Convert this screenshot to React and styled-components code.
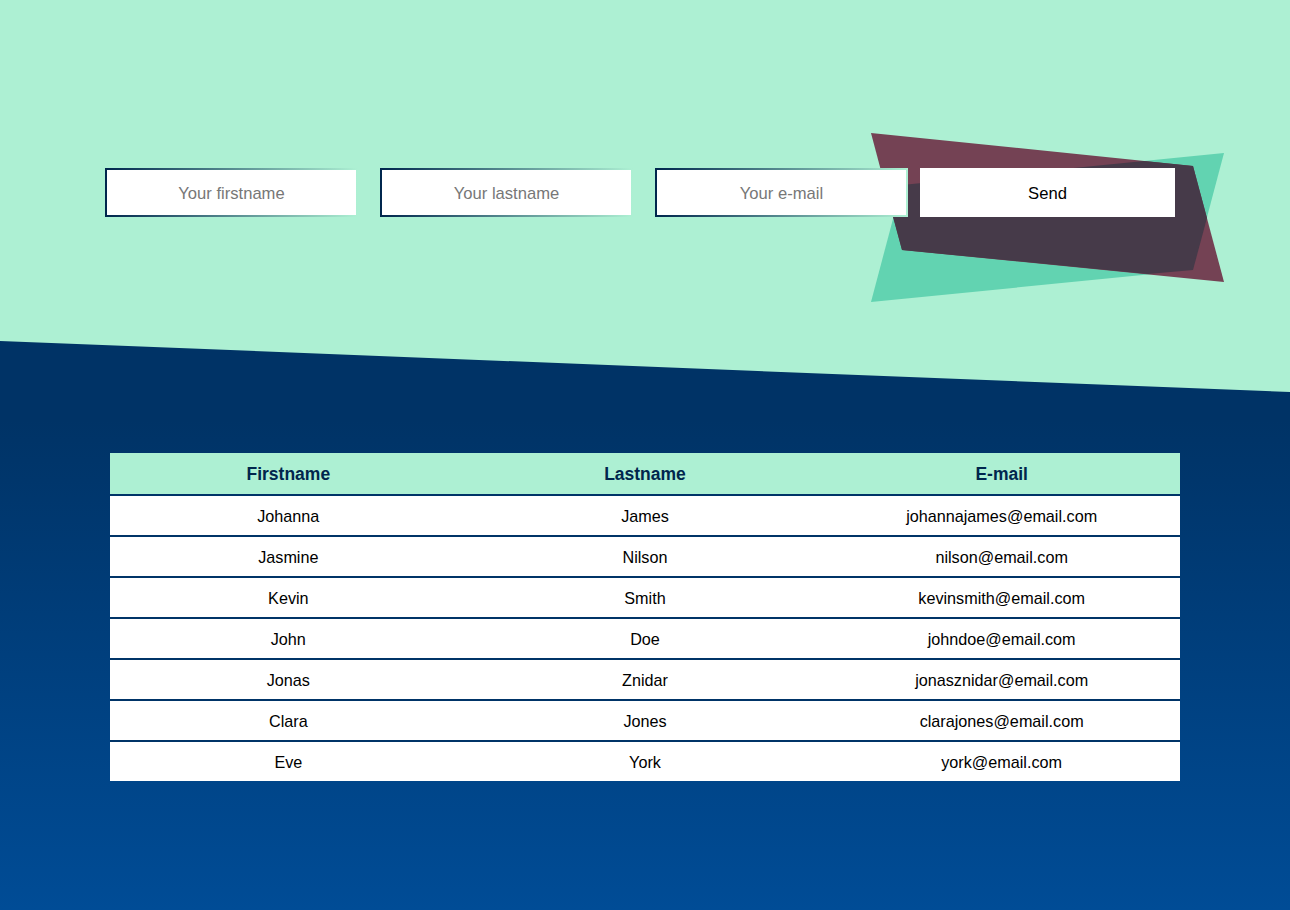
import React from "react";
import styled, { createGlobalStyle } from "styled-components";

const colors = {
  mint: "#adf0d3",
  navy: "#003366",
  navyDeep: "#00264d",
  blue: "#004c96",
  maroon: "#744254",
  green: "#62d3b1",
  overlap: "#463a49",
};

const GlobalStyle = createGlobalStyle`
  html, body {
    margin: 0;
    padding: 0;
  }
  body {
    min-height: 910px;
    font-family: "Liberation Sans", Arial, sans-serif;
    background: linear-gradient(to bottom, ${colors.navy} 0px, ${colors.navy} 420px, ${colors.blue} 910px);
    overflow: hidden;
  }
`;

const Page = styled.div`
  width: 1290px;
  height: 910px;
`;

const Hero = styled.header`
  position: relative;
  height: 392px;
  background: ${colors.mint};
  clip-path: polygon(0 0, 100% 0, 100% 100%, 0 341px);
`;

const Shapes = styled.svg`
  position: absolute;
  top: 0;
  left: 0;
  z-index: 0;
`;

const Form = styled.form`
  position: relative;
  z-index: 1;
  display: flex;
  align-items: center;
  padding: 168px 0 0 105px;
`;

const Field = styled.input`
  box-sizing: border-box;
  width: 253px;
  height: 49px;
  margin: 0;
  margin-right: ${(p) => (p.$last ? "12px" : "22px")};
  padding: 2px 0 0;
  border: 2px solid;
  border-image: linear-gradient(to right, ${colors.navyDeep}, ${colors.mint}) 1;
  background: #fff;
  font-family: "Liberation Sans", Arial, sans-serif;
  font-size: 16.6px;
  text-align: center;
  outline: none;
  &::placeholder {
    color: #777;
  }
`;

const SendButton = styled.button`
  box-sizing: border-box;
  width: 255px;
  height: 49px;
  margin: 0;
  padding: 2px 0 0;
  border: none;
  background: #fff;
  color: #000;
  font-family: "Liberation Sans", Arial, sans-serif;
  font-size: 16.6px;
  cursor: pointer;
`;

const TableWrap = styled.main`
  padding: 61px 110px 0;
`;

const Table = styled.table`
  width: 1070px;
  border-collapse: collapse;
  table-layout: fixed;
  text-align: center;
`;

const Th = styled.th`
  height: 40px;
  padding: 1px 0 0;
  background: ${colors.mint};
  color: ${colors.navyDeep};
  font-size: 17.5px;
  font-weight: bold;
`;

const Td = styled.td`
  height: 37px;
  padding: 2px 0 0;
  border-top: 2px solid #003467;
  background: #fff;
  color: #000;
  font-size: 16.2px;
`;

const people = [
  ["Johanna", "James", "johannajames@email.com"],
  ["Jasmine", "Nilson", "nilson@email.com"],
  ["Kevin", "Smith", "kevinsmith@email.com"],
  ["John", "Doe", "johndoe@email.com"],
  ["Jonas", "Znidar", "jonasznidar@email.com"],
  ["Clara", "Jones", "clarajones@email.com"],
  ["Eve", "York", "york@email.com"],
];

const App = () => (
  <Page>
    <GlobalStyle />
    <Hero>
      <Shapes width="1290" height="392" viewBox="0 0 1290 392">
        <polygon points="902,185 1224,153 1193,270 871,302" fill={colors.green} />
        <polygon points="871,133 1193,166 1224,282 902,250" fill={colors.maroon} />
        <polygon
          points="902,185 1144,161 1193,166 1207,218 1193,270 1148,274 902,250 893,217"
          fill={colors.overlap}
        />
      </Shapes>
      <Form onSubmit={(e) => e.preventDefault()}>
        <Field placeholder="Your firstname" />
        <Field placeholder="Your lastname" />
        <Field placeholder="Your e-mail" $last />
        <SendButton type="submit">Send</SendButton>
      </Form>
    </Hero>
    <TableWrap>
      <Table>
        <thead>
          <tr>
            <Th>Firstname</Th>
            <Th>Lastname</Th>
            <Th>E-mail</Th>
          </tr>
        </thead>
        <tbody>
          {people.map((row, i) => (
            <tr key={i}>
              {row.map((cell, j) => (
                <Td key={j}>{cell}</Td>
              ))}
            </tr>
          ))}
        </tbody>
      </Table>
    </TableWrap>
  </Page>
);

export default App;
